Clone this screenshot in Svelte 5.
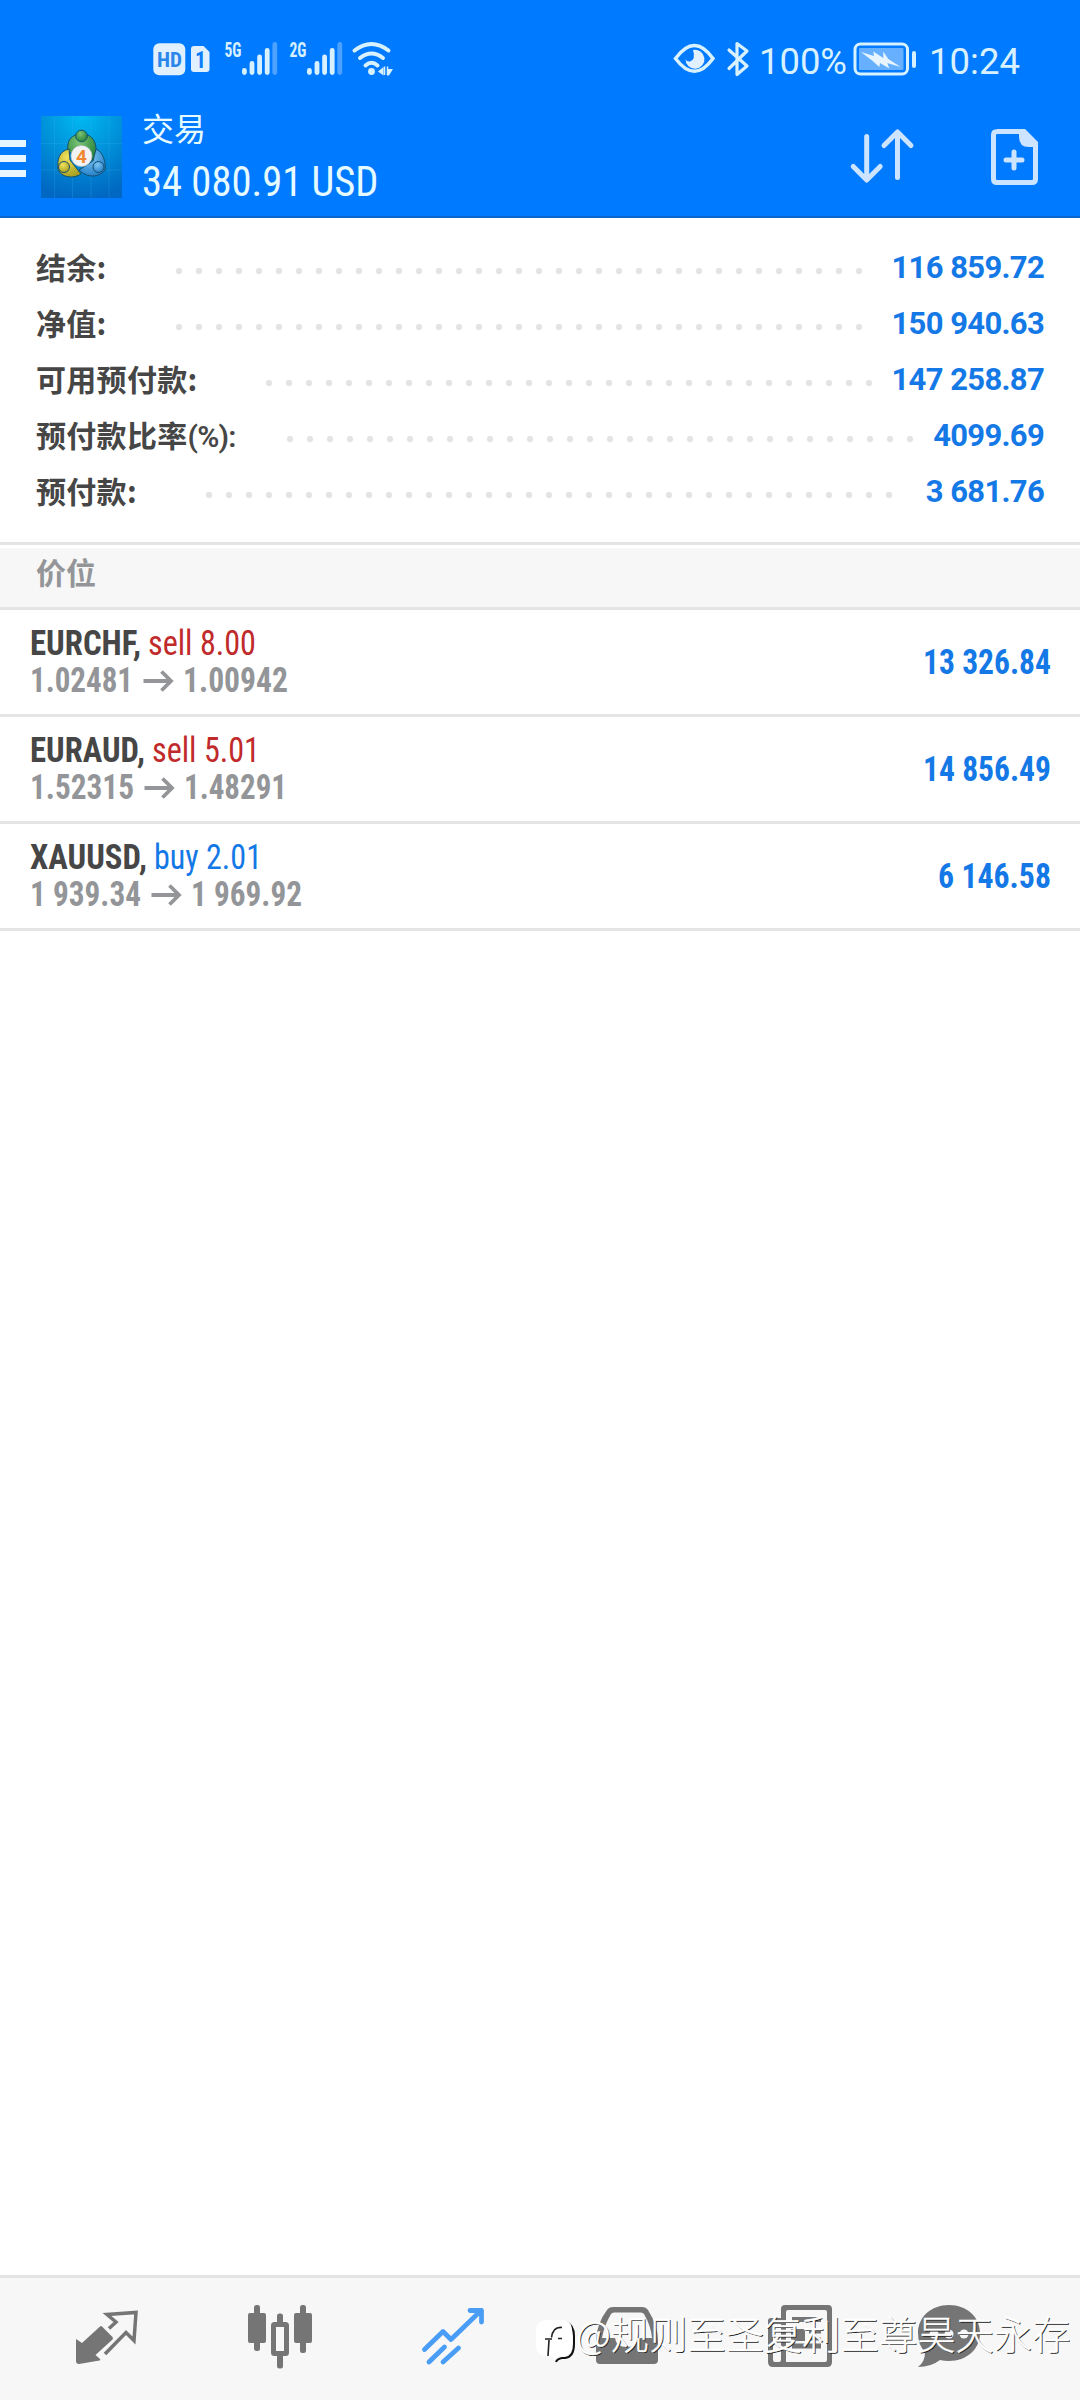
<script lang="ts">
	type Side = 'buy' | 'sell';
	// [text, drawn width]
	type Fitted = [string, number];

	const account = [
		{ label: '结余:', value: '116 859.72', start: 168, dots: 35 },
		{ label: '净值:', value: '150 940.63', start: 168, dots: 35 },
		{ label: '可用预付款:', value: '147 258.87', start: 258, dots: 31 },
		{ label: '预付款比率', suffix: '(%):', value: '4099.69', start: 279, dots: 32 },
		{ label: '预付款:', value: '3 681.76', start: 198, dots: 35 }
	];

	const positions: {
		symbol: Fitted;
		side: Side;
		deal: Fitted;
		open: Fitted;
		current: Fitted;
		profit: Fitted;
	}[] = [
		{
			symbol: ['EURCHF,', 111],
			side: 'sell',
			deal: ['sell 8.00', 108],
			open: ['1.02481', 103],
			current: ['1.00942', 105],
			profit: ['13 326.84', 128]
		},
		{
			symbol: ['EURAUD,', 115],
			side: 'sell',
			deal: ['sell 5.01', 108],
			open: ['1.52315', 104],
			current: ['1.48291', 103],
			profit: ['14 856.49', 128]
		},
		{
			symbol: ['XAUUSD,', 117],
			side: 'buy',
			deal: ['buy 2.01', 108],
			open: ['1 939.34', 111],
			current: ['1 969.92', 111],
			profit: ['6 146.58', 113]
		}
	];

	const networks = ['5G', '2G'];
	const bars = [7, 14, 20.5, 27, 33];
</script>

{#snippet fit([text, width]: Fitted, kind: string, size = 37)}
	<svg class="fit {kind}" {width} height={size} viewBox="0 0 {width} {size}">
		<text x="0" y={size * 0.81} textLength={width} lengthAdjust="spacingAndGlyphs">{text}</text>
	</svg>
{/snippet}

<div class="screen">
	<header>
		<div class="status">
			<svg class="left" width="240" height="40" viewBox="0 0 240 40">
				<rect x="1.3" y="3.3" width="32" height="32" rx="6" fill="#e0f0ff" />
				<text class="hd" x="5" y="27" textLength="25" lengthAdjust="spacingAndGlyphs">HD</text>
				<path d="M42 6h9.500l6 6v17q0 3-3 3h-12.500q-3 0-3-3v-20q0-3 3-3z" fill="#e0f0ff" />
				<text class="sim" x="43" y="28" textLength="11" lengthAdjust="spacingAndGlyphs">1</text>
				{#each networks as name, n}
					<g transform="translate({n * 65} 0)">
						<text class="net" x="72.500" y="16.500" textLength="17" lengthAdjust="spacingAndGlyphs">{name}</text>
						{#each bars as h, i}
							<rect
								x={90 + i * 7.6}
								y={35 - h}
								width="4.800"
								height={h}
								rx="2.400"
								fill={i === 4 ? '#4da2ff' : '#d8f1ff'}
							/>
						{/each}
					</g>
				{/each}
				<g fill="none" stroke="#d8f1ff" stroke-width="4" stroke-linecap="round">
					<path d="M202.500 10.500Q219.500-2.500 236.500 10.500M208 18Q219.500 9 231 18M213.500 25.500Q219.500 20 225.500 25.500" />
				</g>
				<circle cx="219.500" cy="31.500" r="3.400" fill="#d8f1ff" />
				<path d="M231.500 27v8.500l-5.500-4zM235 29h6l-4 6.500h-2z" fill="#d8f1ff" />
				<path d="M232.500 26.500v8.500M235.500 26.500v8.500" stroke="#d8f1ff" stroke-width="1.500" />
			</svg>
			<svg class="eye" width="80" height="40" viewBox="0 0 80 40">
				<path d="M2.500 18.500Q21.500-7.500 40 18.500Q21.500 44 2.500 18.500z" fill="none" stroke="#d8f1ff" stroke-width="3.500" />
				<path d="M20 10A9.500 9.500 0 1 1 12.500 19q1 3 4.500 2.500 6-2 3-11.500z" fill="#e0f0ff" />
				<path d="M56 10l18 16-10 8.500V3.500L74 11 56 28.500" fill="none" stroke="#d8f1ff" stroke-width="3.200" stroke-linejoin="round" stroke-linecap="round" />
			</svg>
			<svg class="percent" width="88" height="40" viewBox="0 0 88 40">
				<text class="clock" x="-1" y="34" textLength="88" lengthAdjust="spacingAndGlyphs">100%</text>
			</svg>
			<svg class="battery" width="66" height="36" viewBox="0 0 66 36">
				<rect x="2" y="2" width="52.500" height="30" rx="5.500" fill="none" stroke="#d8f1ff" stroke-width="3" />
				<rect x="6" y="6" width="44.500" height="22" rx="1" fill="#66b0ff" />
				<path d="M8 10l13 4-.7-4.500 10 6.500v-6.500l5 7.500 12.400 8-13.400-4 2 5.500-9.300-5.500-.7 4-6.600-6z" fill="#e8f5ff" />
				<rect x="59" y="9" width="4" height="17" rx="2" fill="#d8f1ff" />
			</svg>
			<svg class="time" width="94" height="40" viewBox="0 0 94 40">
				<text class="clock" x="0" y="34" textLength="91" lengthAdjust="spacingAndGlyphs">10:24</text>
			</svg>
		</div>

		<div class="toolbar">
			<div class="burger"><i></i><i></i><i></i></div>
			<svg class="logo" width="81" height="82" viewBox="0 0 81 82">
				<defs>
					<radialGradient id="sky" cx=".5" cy="0" r="1">
						<stop offset="0" stop-color="#00b9f2" />
						<stop offset="1" stop-color="#0068c2" />
					</radialGradient>
					<radialGradient id="green" cx=".4" cy=".3" r=".8">
						<stop offset="0" stop-color="#7cc475" />
						<stop offset="1" stop-color="#1b7a32" />
					</radialGradient>
					<radialGradient id="gold" cx=".4" cy=".3" r=".8">
						<stop offset="0" stop-color="#f0e15c" />
						<stop offset="1" stop-color="#a19a1c" />
					</radialGradient>
					<radialGradient id="blue" cx=".4" cy=".3" r=".8">
						<stop offset="0" stop-color="#7dc6f4" />
						<stop offset="1" stop-color="#1b78c4" />
					</radialGradient>
				</defs>
				<rect width="81" height="82" fill="url(#sky)" />
				<path d="M13.500 0v82M31.500 0v82M50 0v82M68 0v82M0 27.500h81M0 54h81" stroke="#3fb4f0" stroke-opacity=".22" />
				<g stroke="#17506b" stroke-width="1">
					<path d="M27 36C25 22 33 18 41 18S58 24 54 41L50 45 31 37z" fill="url(#green)" />
					<path d="M28 33C18 35 16 44 17 53C20 62 33 63 40 58L29 44z" fill="url(#gold)" />
					<path d="M55 33C62 36 65 46 64 54C58 62 46 62 38 54L52 45z" fill="url(#blue)" />
					<circle cx="40.500" cy="20" r="5.800" fill="url(#green)" />
					<circle cx="23" cy="51" r="5.500" fill="url(#gold)" />
					<circle cx="57.500" cy="51" r="5.500" fill="url(#blue)" />
				</g>
				<circle cx="40.500" cy="40" r="10.500" fill="#f3f3f5" stroke="#b9c3c9" stroke-width=".7" />
				<text class="four" x="40.500" y="46.500" text-anchor="middle">4</text>
			</svg>
			<div class="title">
				<span class="name">交易</span>
				{@render fit(['34 080.91 USD', 236.5], 'total', 44)}
			</div>
			<svg class="sort" width="66" height="60" viewBox="0 0 66 60" fill="none" stroke="#cce4ff" stroke-width="5" stroke-linecap="round" stroke-linejoin="round">
				<path d="M17.700 9.500V52M4.200 39.500l13.500 13.500 13.500-13.500M48.500 50.500V5M35 18.500L48.500 5 62 18.500" />
			</svg>
			<svg class="new-order" width="50" height="60" viewBox="0 0 50 60" fill="none" stroke="#cce4ff" stroke-width="5">
				<path d="M6.500 3.500H34L45.500 15V51q0 3.500-3.500 3.500H7q-3.500 0-3.500-3.500V7q0-3.500 3.500-3.500z" />
				<path d="M29 4h5l12 11.500V19h-7q-10 0-10-10z" fill="#cce4ff" stroke="none" />
				<path d="M24 24v16M16 32h16" stroke-linecap="round" />
			</svg>
		</div>
	</header>

	<section class="account">
		{#each account as row}
			<div class="account-row">
				<span class="label" style="width: {row.start - 35.5}px">{row.label}{#if row.suffix}<span class="suffix">{row.suffix}</span>{/if}</span>
				<span class="dots" style="width: {row.dots * 20}px"></span>
				<span class="value">{row.value}</span>
			</div>
		{/each}
	</section>

	<h2>价位</h2>

	<ul class="positions">
		{#each positions as p}
			<li>
				<div class="info">
					<div class="deal">
						{@render fit(p.symbol, 'symbol')}
						{@render fit(p.deal, p.side)}
					</div>
					<div class="prices">
						{@render fit(p.open, 'price')}
						<svg width="31" height="22" viewBox="0 0 31 22" fill="none" stroke="#939598" stroke-width="3.800">
							<path d="M.5 11H28M18.500 1.500L28 11l-9.500 9.500" />
						</svg>
						{@render fit(p.current, 'price')}
					</div>
				</div>
				{@render fit(p.profit, 'profit')}
			</li>
		{/each}
	</ul>

	<nav>
		<svg width="66" height="66" viewBox="0 0 66 66">
			<path d="M2 35l6 4L26 22.500q1-1 2 0L38.500 33q1 1 0 2.500L21.500 51l4.500 4q1 1-.5 1.500L5 60q-3 0-3-3z" fill="#757575" />
			<path d="M35 24.500l7-6.500-9-7.500 29-2-2 28-8-8L31 50" fill="none" stroke="#757575" stroke-width="3.500" />
		</svg>
		<svg width="66" height="66" viewBox="0 0 66 66" fill="#757575">
			<rect x="7" y="1" width="6" height="46" rx="2.500" />
			<rect x="1" y="9" width="18" height="30" rx="2" />
			<rect x="53" y="1" width="6" height="48" rx="2.500" />
			<rect x="47" y="9" width="18" height="30" rx="2" />
			<rect x="30" y="9.500" width="6" height="12" rx="2.500" />
			<rect x="30" y="49" width="6" height="15.500" rx="2.500" />
			<rect x="26.500" y="20.500" width="13" height="29" rx="1" fill="none" stroke="#757575" stroke-width="5" />
		</svg>
		<svg width="66" height="66" viewBox="0 0 66 66" fill="none" stroke="#4a9df5" stroke-width="4.800" stroke-linecap="round" stroke-linejoin="round">
			<path d="M4.500 45.500L23 27.500l8 8L60.500 7M50 6.500h11.500v11.500M9 58l15.500-15M23 58L38.500 44" />
		</svg>
		<svg width="66" height="66" viewBox="0 0 66 66">
			<path d="M13 6q2-3 6-3h29q4 0 6 3 10 16 10 30v20q0 4-4 4H6q-4 0-4-4V36Q3 19 13 6z" fill="#757575" />
			<path d="M17 10q1-1.500 3-1.500h27q2 0 3 1.500 7 12 8 24H45q-1 9-12 9t-12-9H8q2-12 9-24z" fill="#f7f7f7" />
		</svg>
		<svg width="66" height="66" viewBox="0 0 66 66">
			<path d="M4 14h10V5q0-4 4-4h43q4 0 4 4v53q0 5-5 5H6q-5 0-5-5V17q0-3 3-3z" fill="#757575" />
			<path d="M19 8q0-2 2-2h37q2 0 2 2v48q0 2-2 2H19zM6 20h8v36q0 2-2 2H8q-2 0-2-2z" fill="#f7f7f7" />
			<path d="M25 15.500h29M25 42h29" stroke="#757575" stroke-width="5" />
			<rect x="24" y="25" width="14" height="12" fill="#757575" />
			<path d="M42 28h12M42 35h12" stroke="#757575" stroke-width="3" />
		</svg>
		<svg width="66" height="66" viewBox="0 0 66 66">
			<path d="M33 1C51 1 64 13 64 29S51 57 33 57q-5 0-9-1Q15 63 2 63 9 58 9 48 2 41 2 29C2 13 15 1 33 1z" fill="#757575" />
			<g fill="#f7f7f7">
				<circle cx="18" cy="30" r="4.500" />
				<circle cx="33" cy="30" r="4.500" />
				<circle cx="48" cy="30" r="4.500" />
			</g>
		</svg>

		<div class="watermark">
			<svg width="40" height="46" viewBox="0 0 40 46">
				<path d="M30 2q8 3 8 14v8q0 13-9 14h-3q-5 1-6 4" fill="none" stroke="#111" stroke-width="2" />
				<path d="M12 0h14q10 0 10 11v14q0 11-10 11h-4l-4 5-1-5h-6Q0 36 0 25V11Q0 0 12 0z" fill="#fff" />
				<path d="M26 7.500q-9-1-10.500 10M9 19h7M13 20l-1 16M22 18.500h4" fill="none" stroke="#222" stroke-width="1.600" />
			</svg>
			<span>@规则至圣复利至尊昊天永存</span>
		</div>
	</nav>
</div>

<style>
	:global(body) {
		margin: 0;
		background: #fff;
	}

	.screen {
		display: flex;
		flex-direction: column;
		width: 1080px;
		height: 2400px;
		overflow: hidden;
		background: #fff;
		font-family: 'Roboto', 'Noto Sans CJK SC', sans-serif;
	}

	svg {
		display: block;
		flex: none;
		overflow: visible;
	}

	.fit {
		font-family: 'Roboto Condensed', 'Roboto', sans-serif;
		font-stretch: condensed;
		font-size: 35px;
		fill: currentColor;
	}

	header {
		box-sizing: border-box;
		height: 218px;
		background: #007aff;
		border-bottom: 2px solid #0a66cc;
	}

	.status {
		display: flex;
		align-items: flex-start;
		height: 60px;
		padding: 40px 0 0 152px;
	}

	.eye {
		margin-left: 281px;
	}

	.percent {
		margin-left: 7px;
	}

	.battery {
		margin: 2px 0 0 5px;
	}

	.time {
		margin-left: 10px;
	}

	.hd,
	.sim,
	.net {
		font-family: 'Roboto Condensed', 'Roboto', sans-serif;
		font-weight: 700;
	}

	.hd {
		font-size: 21px;
		fill: #2a86ea;
	}

	.sim {
		font-size: 23px;
		fill: #0a7cf5;
	}

	.net {
		font-size: 20px;
		fill: #d8f1ff;
	}

	.clock {
		font-size: 37px;
		fill: #d8f1ff;
	}

	.toolbar {
		display: flex;
		align-items: flex-start;
		height: 116px;
	}

	.burger {
		display: flex;
		flex-direction: column;
		gap: 8px;
		width: 26px;
		margin-top: 40px;
	}

	.burger i {
		height: 7px;
		background: #e8f7ff;
	}

	.logo {
		margin: 16px 0 0 15px;
	}

	.four {
		font-size: 19px;
		font-weight: 700;
		fill: #f08a32;
	}

	.title {
		display: flex;
		flex-direction: column;
		width: 690px;
		margin-left: 20px;
		padding-top: 10px;
		color: #e6fbff;
		white-space: nowrap;
	}

	.name {
		font-size: 32px;
		line-height: 40px;
	}

	.total {
		margin-top: 10px;
		font-size: 42.5px;
	}

	.sort {
		margin: 27px 0 0 17px;
	}

	.new-order {
		margin: 28px 0 0 75px;
	}

	.account {
		box-sizing: border-box;
		height: 327px;
		padding: 21px 36px 0;
		border-bottom: 3px solid #e4e4e4;
	}

	.account-row {
		display: flex;
		align-items: center;
		height: 56px;
	}

	.label {
		flex: none;
		padding-bottom: 3px;
		color: #464646;
		font-family: 'Noto Sans CJK SC', sans-serif;
		font-size: 30px;
		font-weight: 700;
		letter-spacing: 0.3px;
		white-space: nowrap;
	}

	.suffix {
		font-family: 'Roboto', sans-serif;
		font-weight: 600;
		letter-spacing: -0.8px;
	}

	.dots {
		flex: none;
		height: 20px;
		margin-top: 7px;
		background: radial-gradient(circle, #e4e4e4 2.8px, transparent 3.6px) 0 0 / 20px 20px;
	}

	.value {
		margin-left: auto;
		color: #1479e6;
		font-size: 31px;
		font-weight: 700;
		letter-spacing: -0.7px;
		word-spacing: 0.5px;
	}

	h2 {
		box-sizing: border-box;
		height: 62px;
		margin: 3px 0 0;
		padding-left: 36px;
		background: #f7f7f7;
		border-bottom: 3px solid #e4e4e4;
		color: #939598;
		font-family: 'Noto Sans CJK SC', sans-serif;
		font-size: 30px;
		font-weight: 700;
		line-height: 47px;
	}

	.positions {
		flex: 1;
		margin: 0;
		padding: 0;
		list-style: none;
	}

	li {
		box-sizing: border-box;
		display: flex;
		align-items: center;
		justify-content: space-between;
		height: 107px;
		padding: 0 29px 0 30px;
		border-bottom: 3px solid #e4e4e4;
	}

	.deal {
		display: flex;
		gap: 7px;
	}

	.symbol {
		color: #464646;
		font-weight: 700;
	}

	.sell {
		color: #c02a2a;
	}

	.buy {
		color: #1479e6;
	}

	.prices {
		display: flex;
		align-items: center;
		gap: 9.5px;
		color: #939598;
	}

	.price {
		font-weight: 700;
	}

	.profit {
		color: #1479e6;
		font-weight: 700;
	}

	nav {
		position: relative;
		box-sizing: border-box;
		display: grid;
		grid-template-columns: repeat(5, 173.4px) 124px;
		justify-items: center;
		height: 125px;
		padding: 26px 0 0 20px;
		background: #f7f7f7;
		border-top: 3px solid #e4e4e4;
	}

	.watermark {
		position: absolute;
		left: 536px;
		top: 42px;
		display: flex;
		align-items: flex-start;
		color: #fff;
		font-family: 'Noto Sans CJK SC', sans-serif;
		font-size: 38.3px;
		font-weight: 300;
		line-height: 26px;
		text-shadow: 1px 1px 0 #222;
		-webkit-text-stroke: 0.4px #fff;
		white-space: nowrap;
	}
</style>
